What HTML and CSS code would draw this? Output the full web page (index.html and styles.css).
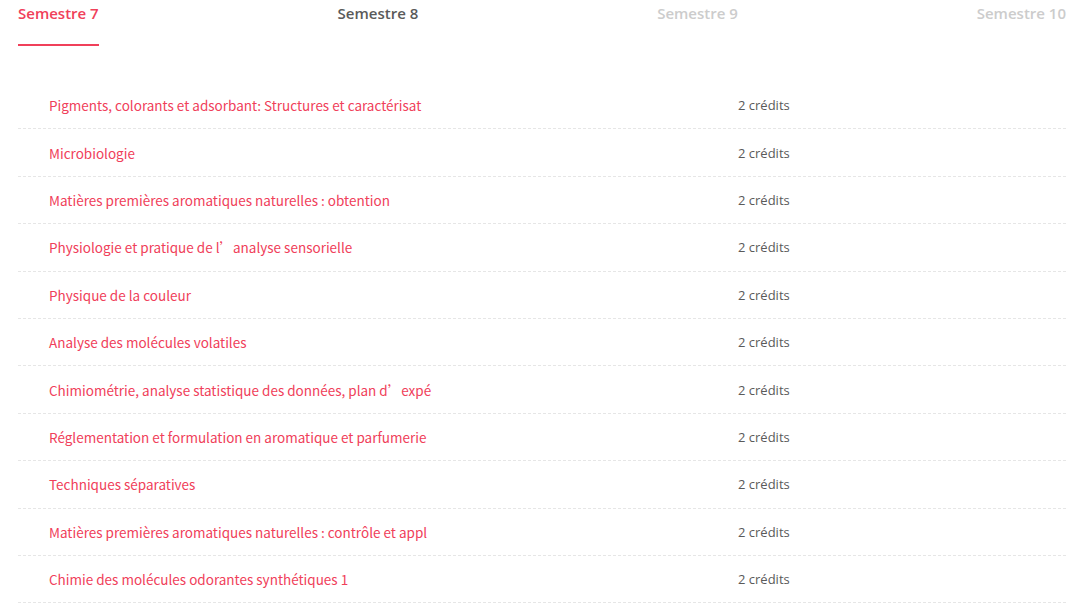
FILE: index.html
```html
<!DOCTYPE html>
<html>
<head>
    <meta charset="utf-8">
    <link rel="stylesheet" href="styles.css">
</head>
<body>
    <div class="page">
        <div class="tabs">
            <span class="tab active">Semestre 7</span>
            <span class="tab">Semestre 8</span>
            <span class="tab muted">Semestre 9</span>
            <span class="tab muted">Semestre 10</span>
        </div>
        <ul class="courses">
            <li class="course"><span class="name">Pigments, colorants et adsorbant: Structures et caractérisat</span><span class="credits">2 crédits</span></li>
            <li class="course"><span class="name">Microbiologie</span><span class="credits">2 crédits</span></li>
            <li class="course"><span class="name">Matières premières aromatiques naturelles : obtention</span><span class="credits">2 crédits</span></li>
            <li class="course"><span class="name">Physiologie et pratique de l’analyse sensorielle</span><span class="credits">2 crédits</span></li>
            <li class="course"><span class="name">Physique de la couleur</span><span class="credits">2 crédits</span></li>
            <li class="course"><span class="name">Analyse des molécules volatiles</span><span class="credits">2 crédits</span></li>
            <li class="course"><span class="name">Chimiométrie, analyse statistique des données, plan d’expé</span><span class="credits">2 crédits</span></li>
            <li class="course"><span class="name">Réglementation et formulation en aromatique et parfumerie</span><span class="credits">2 crédits</span></li>
            <li class="course"><span class="name">Techniques séparatives</span><span class="credits">2 crédits</span></li>
            <li class="course"><span class="name">Matières premières aromatiques naturelles : contrôle et appl</span><span class="credits">2 crédits</span></li>
            <li class="course"><span class="name">Chimie des molécules odorantes synthétiques 1</span><span class="credits">2 crédits</span></li>
        </ul>
    </div>
</body>
</html>
```

FILE: styles.css
```css
body {
    margin: 0;
    background-color: #fff;
    font-family: "Open Sans", Arial, sans-serif;
}
.page {
    padding: 0 14px 0 18px;
}
.tabs {
    display: flex;
    justify-content: space-between;
}
.tab {
    font-size: 15px;
    font-weight: 600;
    line-height: 20px;
    padding: 3px 0 21px;
    color: #5a5a5a;
    border-bottom: 2px solid transparent;
}
.tab.active {
    color: #f0405a;
    border-bottom-color: #f0405a;
}
.tab.muted {
    color: #cccccc;
}
.courses {
    list-style: none;
    margin: 36px 0 0;
    padding: 0;
}
.course {
    display: grid;
    grid-template-columns: 720px 1fr;
    align-items: center;
    height: 46.4px;
    border-bottom: 1px dashed #e6e6e6;
}
.name {
    padding-left: 31px;
    font-family: "Noto Sans CJK SC", sans-serif;
    font-size: 13.5px;
    color: #f0405a;
}
.credits {
    font-size: 13px;
    color: #5a5a5a;
}
```
